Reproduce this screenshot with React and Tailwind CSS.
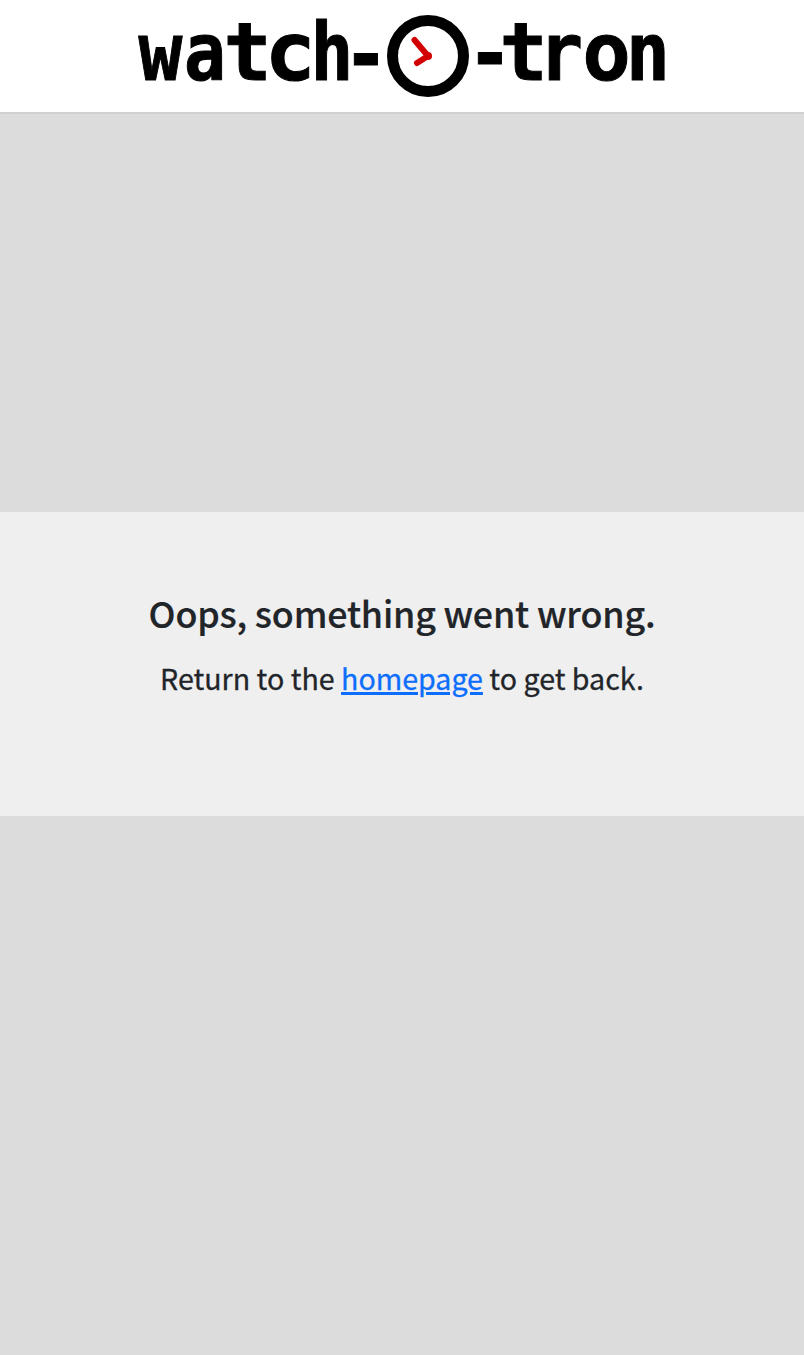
import React from "react";

const LETTERS = [
  ["w", 22.5, 66, 0.91],
  ["a", 67, 66, 0.87],
  ["t", 109.5, 66, 0.99],
  ["c", 152.3, 66, 1.06],
  ["h", 194, 66, 0.89],
  ["-", 228, 68, 0.94],
  ["-", 352, 67, 0.94],
  ["t", 385.5, 65.5, 0.99],
  ["r", 423, 65.5, 0.92],
  ["o", 468.5, 65.5, 1],
  ["n", 510, 65.5, 0.91],
];

function Logo() {
  return (
    <svg viewBox="-10 -14 548 112" className="h-[112px] w-[548px]" role="img" aria-label="watch-o-tron">
      <g
        className="font-['DejaVu_Sans_Mono',monospace] text-[80px] font-bold"
        textAnchor="middle"
        stroke="black"
        strokeWidth="1"
      >
        {LETTERS.map(([letter, x, y, scale], i) => (
          <text key={i} transform={`translate(${x} ${y}) scale(${scale} 1)`}>{letter}</text>
        ))}
      </g>
      <circle cx="290" cy="42" r="35.5" fill="white" stroke="black" strokeWidth="11" />
      <path d="M276.5 26L290 42L279 49" fill="none" stroke="#d20000" strokeWidth="6" strokeLinecap="round" strokeLinejoin="round" />
      <circle cx="290" cy="42" r="4" fill="#d20000" />
    </svg>
  );
}

export default function App() {
  return (
    <div className="flex h-[1355px] flex-col bg-[#dcdcdc] font-['Noto_Sans_CJK_SC',sans-serif] text-[#212529]">
      <header className="flex h-[114px] shrink-0 justify-center border-b-2 border-[#d0d0d0] bg-white">
        <Logo />
      </header>
      <main className="mt-[398px] h-[304px] bg-[#efefef] pt-[76px] text-center">
        <h1 className="text-[35.8px] leading-[48px] font-medium tracking-[-0.19px] whitespace-nowrap [-webkit-text-stroke:0.2px]">Oops, something went wrong.</h1>
        <p className="mt-[18px] text-[28.6px] leading-[48px] whitespace-nowrap [-webkit-text-stroke:0.3px]">
          Return to the{" "}
          <a href="#" className="text-[#0d6efd] underline decoration-[3px] underline-offset-[2px]">homepage</a>{" "}
          to get back.
        </p>
      </main>
    </div>
  );
}
